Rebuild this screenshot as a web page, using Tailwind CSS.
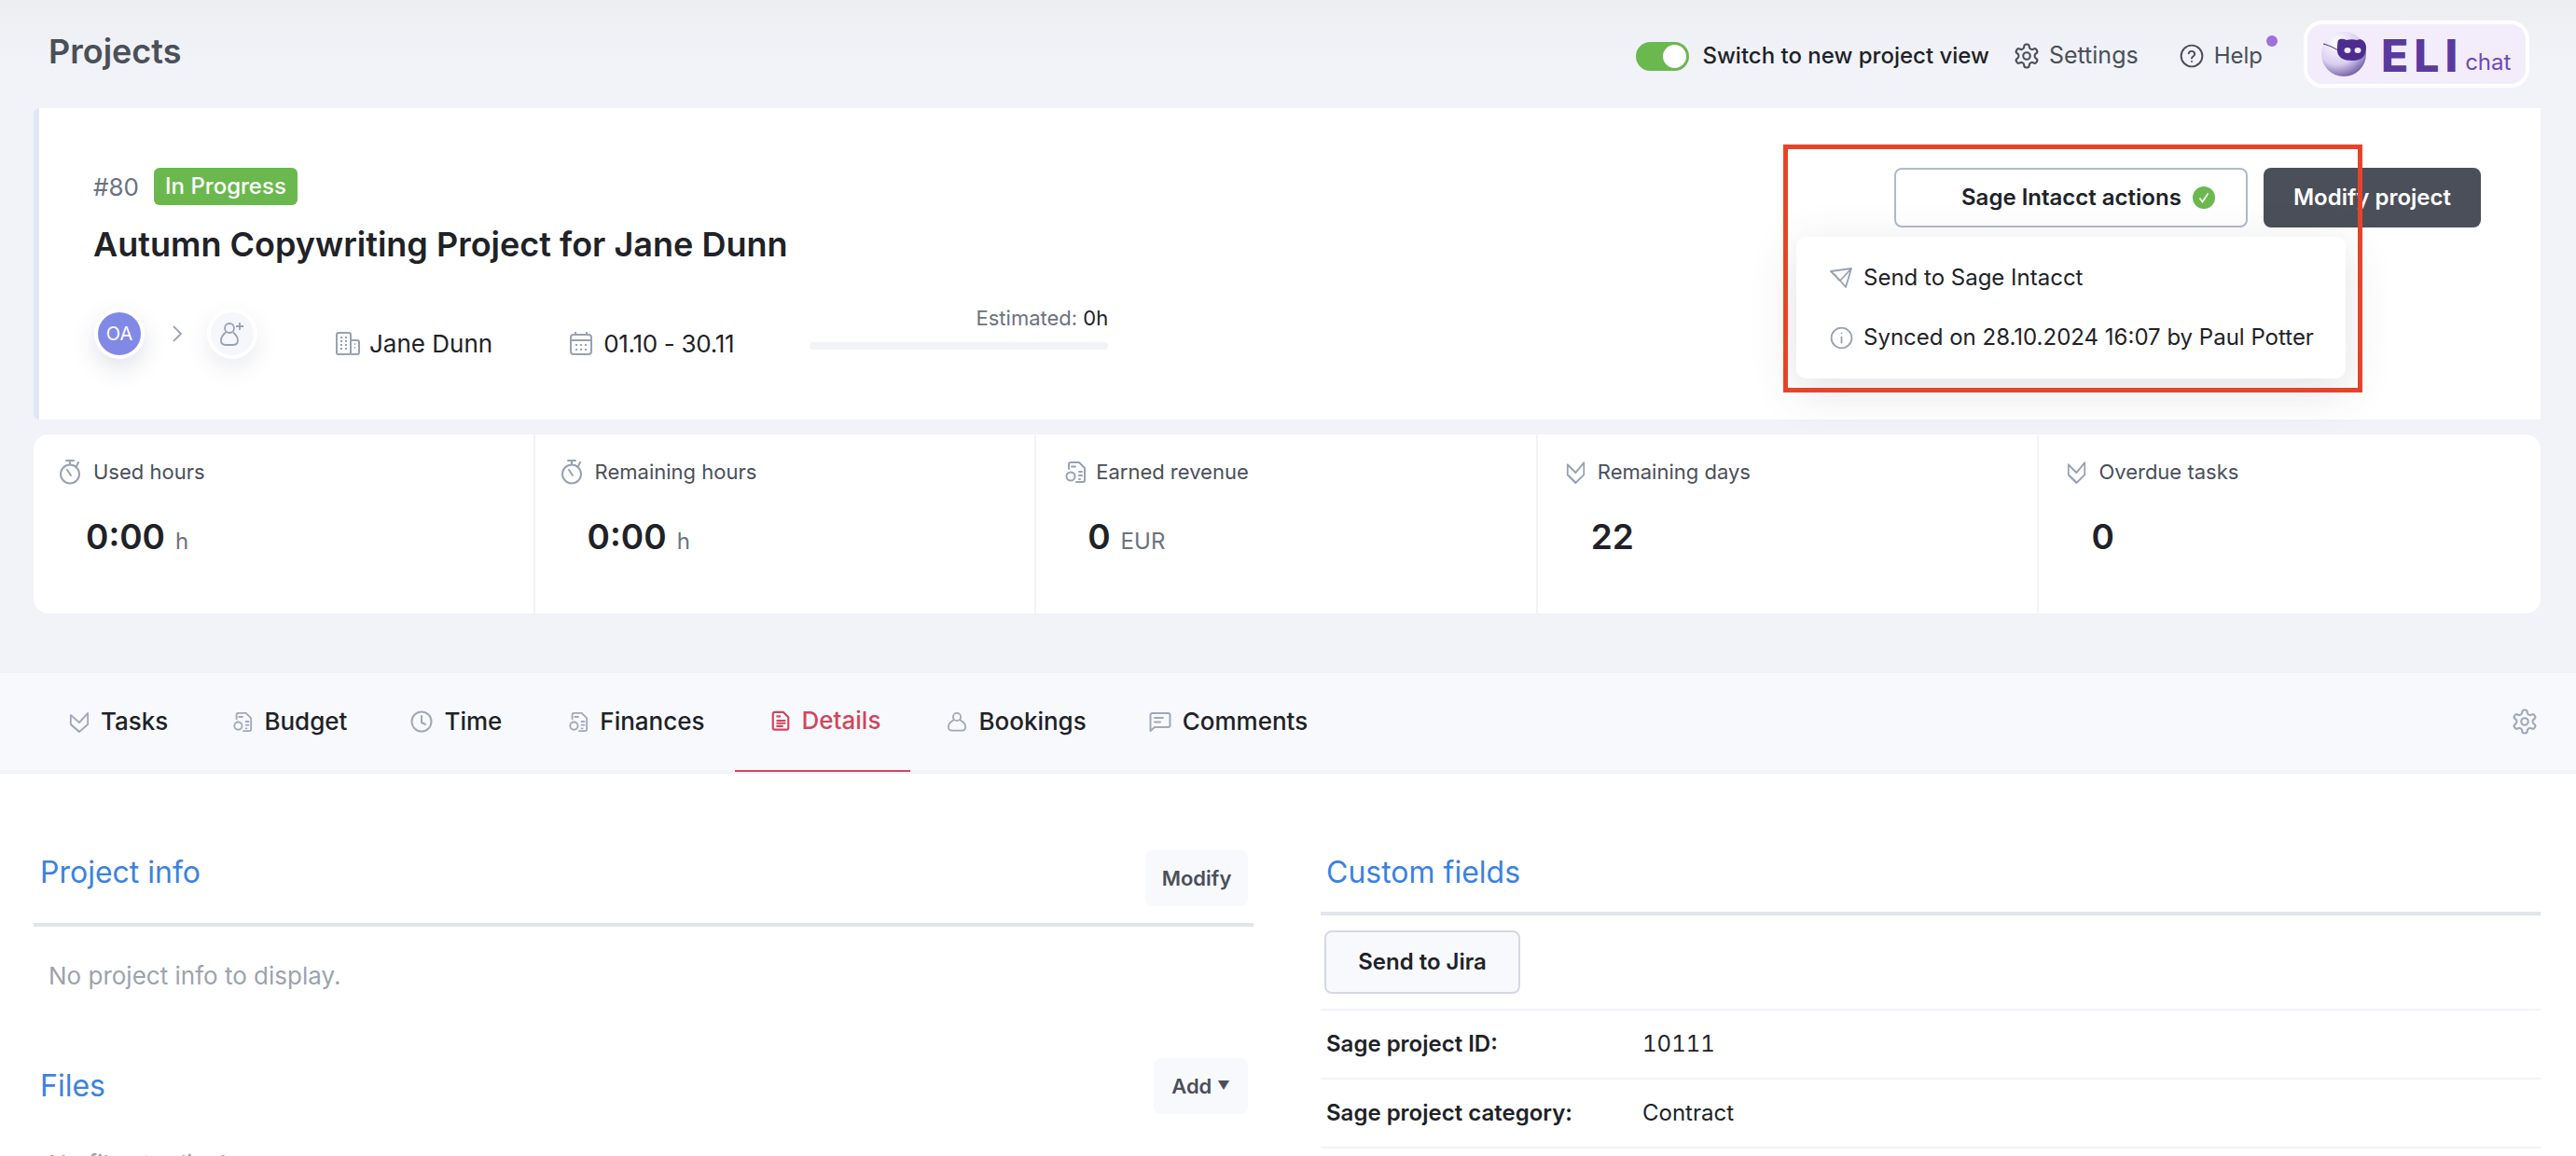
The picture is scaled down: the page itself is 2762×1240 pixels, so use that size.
<!DOCTYPE html>
<html lang="en">
<head>
    <meta charset="UTF-8">
    <title>Projects</title>
    <script src="https://cdn.jsdelivr.net/npm/@tailwindcss/browser@4"></script>
</head>
<body class="bg-[#f1f3f8] font-['Inter',sans-serif] text-[#202227]">
    <!-- shared icons -->
    <svg class="hidden">
        <symbol id="i-check" viewBox="0 0 24 24" preserveAspectRatio="none" fill="none" stroke-width="2" stroke-linejoin="round"><path d="M2 5v10l10 8 10-8V3L12 13z"/><path d="M2 15l10 8"/></symbol>
        <symbol id="i-budget" viewBox="0 0 24 24" fill="none" stroke-width="2" stroke-linecap="round" stroke-linejoin="round"><path d="M5 9V4a2 2 0 0 1 2-2h9l6 6v13a2 2 0 0 1-2 2h-7"/><circle cx="7" cy="17" r="4.5"/><path d="M8 6.5h4M16 12h3M16 16h3M16 20h1"/></symbol>
        <symbol id="i-clock" viewBox="0 0 24 24" fill="none" stroke-width="2" stroke-linecap="round" stroke-linejoin="round"><circle cx="12" cy="12" r="10.5"/><path d="M12 6v7l4 2"/></symbol>
        <symbol id="i-doc" viewBox="0 0 24 24" fill="none" stroke-width="2.4" stroke-linecap="round" stroke-linejoin="round"><path d="M5 2h10l6 6v13a1.5 1.5 0 0 1-1.500 1.500h-15A1.500 1.500 0 0 1 3 21V4a2 2 0 0 1 2-2z"/><path d="M8 7h3M8 12h9M8 15h9M8 18.500h6"/></symbol>
        <symbol id="i-person" viewBox="0 0 24 24" fill="none" stroke-width="2" stroke-linejoin="round"><circle cx="12" cy="6.500" r="4.500"/><path d="M8.500 10C5 12 2 15 2 18c0 3 2 4.500 4 4.500h12c2 0 4-1.500 4-4.500 0-3-3-6-6.500-8"/></symbol>
        <symbol id="i-comment" viewBox="0 0 24 24" fill="none" stroke-width="2" stroke-linecap="round" stroke-linejoin="round"><path d="M1.500 22V5a2 2 0 0 1 2-2h17a2 2 0 0 1 2 2v11a2 2 0 0 1-2 2H6z"/><path d="M6 8h9M6 12.500h6"/></symbol>
        <symbol id="i-watch" viewBox="0 0 24 28" fill="none" stroke-width="2" stroke-linecap="round" stroke-linejoin="round"><circle cx="11" cy="16.500" r="10"/><path d="M7 2h8M11 2v4M20 4l-2.500 5M8 12l4 6"/></symbol>
        <symbol id="i-gear" viewBox="0 0 24 24" fill="none" stroke-width="1.700" stroke-linecap="round" stroke-linejoin="round"><path d="M12.220 2h-.44a2 2 0 0 0-2 2v.18a2 2 0 0 1-1 1.730l-.43.25a2 2 0 0 1-2 0l-.15-.08a2 2 0 0 0-2.730.73l-.22.38a2 2 0 0 0 .73 2.730l.15.1a2 2 0 0 1 1 1.720v.51a2 2 0 0 1-1 1.740l-.15.09a2 2 0 0 0-.73 2.730l.22.38a2 2 0 0 0 2.730.73l.15-.08a2 2 0 0 1 2 0l.43.25a2 2 0 0 1 1 1.730V20a2 2 0 0 0 2 2h.44a2 2 0 0 0 2-2v-.18a2 2 0 0 1 1-1.730l.43-.25a2 2 0 0 1 2 0l.15.08a2 2 0 0 0 2.730-.73l.22-.39a2 2 0 0 0-.73-2.730l-.15-.08a2 2 0 0 1-1-1.740v-.5a2 2 0 0 1 1-1.740l.15-.09a2 2 0 0 0 .73-2.730l-.22-.38a2 2 0 0 0-2.730-.73l-.15.08a2 2 0 0 1-2 0l-.43-.25a2 2 0 0 1-1-1.730V4a2 2 0 0 0-2-2z"/><circle cx="12" cy="12" r="3"/></symbol>
    </svg>

    <div class="relative w-[2762px] h-[1240px] overflow-hidden">
        <!-- top bar -->
        <header class="h-[116px] pt-[4px] pl-[52px] pr-[50px] flex items-center justify-between bg-gradient-to-b from-[#eceef2] to-[#f1f3f8] to-[60%]">
            <h1 class="text-[36px] font-semibold text-[#4b4f59] leading-none -mt-[10px]">Projects</h1>
            <div class="flex items-center">
                <div class="w-[57px] h-[31px] rounded-full bg-[#6bb84f] flex items-center justify-end pr-[3px]">
                    <div class="w-[25px] h-[25px] rounded-full bg-white"></div>
                </div>
                <span class="ml-[14px] text-[24px] font-medium">Switch to new project view</span>
                <svg class="ml-[25px] w-[30px] h-[30px] stroke-[#4b4f59]"><use href="#i-gear"/></svg>
                <span class="ml-[9px] text-[25px] text-[#4b4f59]">Settings</span>
                <svg class="ml-[44px] w-[26px] h-[26px]" viewBox="0 0 24 24" fill="none" stroke="#4b4f59" stroke-width="1.800" stroke-linecap="round"><circle cx="12" cy="12" r="10.500"/><path d="M9 9.500a3 3 0 0 1 5.900.8c0 2-2.900 2.400-2.900 4"/><path d="M12 17.500h.01"/></svg>
                <span class="relative ml-[11px] mr-[44px] text-[24px] text-[#4b4f59]">Help
                    <span class="absolute -top-[4px] -right-[16px] w-[12px] h-[12px] rounded-full bg-[#a070dd]"></span>
                </span>
                <div class="w-[242px] h-[72px] -mt-[4px] rounded-[20px] border-4 border-white bg-[#f3edfb] flex items-center pl-[15px]">
                    <svg class="w-[50px] h-[50px]" viewBox="0 0 50 50">
                        <defs><radialGradient id="ball" cx="35%" cy="25%" r="80%"><stop offset="0" stop-color="#ffffff"/><stop offset=".6" stop-color="#d9cff0"/><stop offset="1" stop-color="#6f5ca3"/></radialGradient></defs>
                        <circle cx="24" cy="25" r="24" fill="url(#ball)"/>
                        <path d="M2 14c8 2 14 6 18 8" stroke="#3d2a6e" stroke-width="1" fill="none"/>
                        <path d="M18 10c3-2 6-1 9 0 4-1 7-1 11 0 4-2 9 0 10 7 0 10-4 15-15 15-9 0-15-3-16-10 0-4 0-9 1-12z" fill="#4d2c8f"/>
                        <ellipse cx="28" cy="21" rx="3.500" ry="3" fill="#efe8fb"/>
                        <ellipse cx="39" cy="21" rx="3.500" ry="3" fill="#efe8fb"/>
                    </svg>
                    <span class="ml-[14px] mt-[4px] text-[48px] font-extrabold leading-none text-[#5b3a9f] tracking-[6px]">ELI</span>
                    <span class="ml-[2px] mt-[18px] text-[24px] leading-none text-[#6d4bb0]">chat</span>
                </div>
            </div>
        </header>

        <!-- project card -->
        <section class="relative ml-[36px] w-[2688px] h-[334px] bg-white border-l-[6px] border-[#e1e7f3] rounded-l-[6px] pl-[58px]">
            <div class="pt-[64px] flex items-center h-[104px]">
                <span class="text-[26px] text-[#6b7280]">#80</span>
                <span class="ml-[16px] h-[40px] w-[154px] rounded-[6px] bg-[#6bb84f] text-white text-[24px] font-medium flex items-center justify-center">In Progress</span>
            </div>
            <h2 class="mt-[20px] text-[36px] leading-[44px] font-semibold">Autumn Copywriting Project for Jane Dunn</h2>

            <div class="mt-[47px] flex items-start">
                <div class="ml-[1px] flex items-center">
                    <div class="w-[54px] h-[54px] rounded-full border-[4px] border-white bg-[#8189e6] text-white text-[20px] flex items-center justify-center shadow-[0_10px_24px_rgba(90,100,140,0.18)]">OA</div>
                    <svg class="ml-[27px] w-[16px] h-[22px]" viewBox="0 0 16 22" fill="none" stroke="#a0a8b8" stroke-width="2"><path d="M4 3l8 8-8 8"/></svg>
                    <div class="ml-[24px] w-[54px] h-[54px] rounded-full border-[4px] border-white bg-[#f5f7fc] flex items-center justify-center shadow-[0_10px_24px_rgba(90,100,140,0.12)]">
                        <svg class="w-[28px] h-[28px]" viewBox="0 0 28 28" fill="none" stroke="#98a1b3" stroke-width="1.800" stroke-linejoin="round"><circle cx="11" cy="8" r="5"/><path d="M7 12.500C4 15 2 18 2 21c0 3 2 5 5 5h8c3 0 5-2 5-5 0-3-2-6-5-8.500M22 2v8M18 6h8"/></svg>
                    </div>
                </div>
                <div class="ml-[84px] mt-[16px] flex items-center h-[42px]">
                    <svg class="w-[26px] h-[26px]" viewBox="0 0 26 26" fill="none" stroke="#98a1b3" stroke-width="2"><rect x="1" y="2" width="15" height="23" rx="2"/><path d="M16 10h7a2 2 0 0 1 2 2v11a2 2 0 0 1-2 2h-7"/><path d="M5 7h2M10 7h2M5 11h2M10 11h2M5 15h2M10 15h2M5 19h2M10 19h2M20 14h1M20 18h1"/></svg>
                    <span class="ml-[10px] text-[26px]">Jane Dunn</span>
                </div>
                <div class="ml-[83px] mt-[16px] flex items-center h-[42px]">
                    <svg class="w-[24px] h-[26px]" viewBox="0 0 24 26" fill="none" stroke="#98a1b3" stroke-width="2"><rect x="1" y="4" width="22" height="21" rx="3"/><path d="M1 10h22M6 1v4M18 1v4M6 15h2M11 15h2M16 15h2M6 20h2M11 20h2M16 20h2"/></svg>
                    <span class="ml-[12px] text-[26px] tracking-[-0.3px]">01.10 - 30.11</span>
                </div>
                <div class="ml-[81px] -mt-[4px] w-[320px]">
                    <p class="text-right text-[22px] leading-[28px] text-[#6b7280]">Estimated: <span class="text-[#202227]">0h</span></p>
                    <div class="mt-[12px] h-[8px] rounded-full bg-[#f1f3f8]"></div>
                </div>
            </div>

            <!-- actions -->
            <div class="absolute top-[64px] right-[64px] flex gap-[17px]">
                <button class="relative w-[379px] h-[64px] rounded-[8px] border-2 border-[#b0bacc] bg-white flex items-center pl-[70px] text-[24px] font-semibold">
                    Sage Intacct actions
                    <svg class="ml-[12px] w-[24px] h-[24px]" viewBox="0 0 24 24"><circle cx="12" cy="12" r="12" fill="#6bb84f"/><path d="M7.500 12.500l3 4 6-9" fill="none" stroke="#fff" stroke-width="1.600"/></svg>
                </button>
                <button class="w-[233px] h-[64px] rounded-[8px] bg-[#4b4f59] text-white text-[24px] font-semibold">Modify project</button>
            </div>
            <div class="absolute z-10 top-[138px] right-[209px] w-[589px] h-[152px] bg-white rounded-[10px] shadow-[0_12px_50px_rgba(60,70,90,0.16)] pl-[36px] flex flex-col">
                <div class="h-[32px] mt-[28px] flex items-center">
                    <svg class="w-[24px] h-[24px]" viewBox="0 0 24 24" fill="none" stroke="#98a1b3" stroke-width="1.800" stroke-linejoin="round"><path d="M1 5l22-3-6 20-6-7zM23 2L11 15l0 0M5 8l5 7"/></svg>
                    <span class="ml-[12px] text-[24px]">Send to Sage Intacct</span>
                </div>
                <div class="h-[32px] mt-[32px] flex items-center">
                    <svg class="w-[25px] h-[25px]" viewBox="0 0 24 24" fill="none" stroke="#98a1b3" stroke-width="1.700" stroke-linecap="round"><circle cx="12" cy="12" r="10.500"/><path d="M12 11v6M12 7h.01"/></svg>
                    <span class="ml-[11px] text-[24px]">Synced on 28.10.2024 16:07 by Paul Potter</span>
                </div>
            </div>
        </section>

        <!-- stats -->
        <section class="ml-[36px] w-[2688px] mt-[16px] h-[192px] bg-white rounded-[16px] grid grid-cols-5 divide-x-2 divide-[#f1f3f8]">
            <div class="pl-[28px] pt-[26px]">
                <div class="flex items-center h-[28px] gap-[12px]"><svg class="w-[24px] h-[28px] stroke-[#98a1b3]"><use href="#i-watch"/></svg><span class="text-[22px] text-[#4b4f59]">Used hours</span></div>
                <div class="ml-[28px] mt-[28px] flex items-baseline gap-[11px]"><span class="text-[37px] font-semibold">0:00</span><span class="text-[24px] text-[#6b7280]">h</span></div>
            </div>
            <div class="pl-[28px] pt-[26px]">
                <div class="flex items-center h-[28px] gap-[12px]"><svg class="w-[24px] h-[28px] stroke-[#98a1b3]"><use href="#i-watch"/></svg><span class="text-[22px] text-[#4b4f59]">Remaining hours</span></div>
                <div class="ml-[28px] mt-[28px] flex items-baseline gap-[11px]"><span class="text-[37px] font-semibold">0:00</span><span class="text-[24px] text-[#6b7280]">h</span></div>
            </div>
            <div class="pl-[30px] pt-[26px]">
                <div class="flex items-center h-[28px] gap-[10px]"><svg class="w-[24px] h-[28px] stroke-[#98a1b3]"><use href="#i-budget"/></svg><span class="text-[22px] text-[#4b4f59]">Earned revenue</span></div>
                <div class="ml-[25px] mt-[28px] flex items-baseline gap-[11px]"><span class="text-[37px] font-semibold">0</span><span class="text-[24px] text-[#6b7280]">EUR</span></div>
            </div>
            <div class="pl-[30px] pt-[26px]">
                <div class="flex items-center h-[28px] gap-[13px]"><svg class="w-[21px] h-[26px] stroke-[#98a1b3]"><use href="#i-check"/></svg><span class="text-[22px] text-[#4b4f59]">Remaining days</span></div>
                <div class="ml-[27px] mt-[28px] flex items-baseline gap-[11px]"><span class="text-[37px] font-semibold">22</span></div>
            </div>
            <div class="pl-[30px] pt-[26px]">
                <div class="flex items-center h-[28px] gap-[13px]"><svg class="w-[21px] h-[26px] stroke-[#98a1b3]"><use href="#i-check"/></svg><span class="text-[22px] text-[#4b4f59]">Overdue tasks</span></div>
                <div class="ml-[26px] mt-[28px] flex items-baseline gap-[11px]"><span class="text-[37px] font-semibold">0</span></div>
            </div>
        </section>

        <!-- tabs -->
        <nav class="mt-[64px] h-[108px] bg-[#f8f9fd] border-b-4 border-[#f1f3f8] pl-[35px] pr-[40px] flex justify-between">
            <div class="flex text-[26px] font-medium">
                <a class="h-[106px] pb-[3px] pl-[39px] pr-[30px] flex items-center gap-[12px]"><svg class="w-[22px] h-[24px] stroke-[#a0a8b8]"><use href="#i-check"/></svg>Tasks</a>
                <a class="h-[106px] pb-[3px] pl-[39px] pr-[32px] flex items-center gap-[12px]"><svg class="w-[22px] h-[24px] stroke-[#a0a8b8]"><use href="#i-budget"/></svg>Budget</a>
                <a class="h-[106px] pb-[3px] pl-[36px] pr-[32px] flex items-center gap-[12px]"><svg class="w-[24px] h-[24px] stroke-[#a0a8b8]"><use href="#i-clock"/></svg>Time</a>
                <a class="h-[106px] pb-[3px] pl-[39px] pr-[32px] flex items-center gap-[12px]"><svg class="w-[22px] h-[24px] stroke-[#a0a8b8]"><use href="#i-budget"/></svg>Finances</a>
                <a class="h-[106px] pb-[3px] pl-[38px] pr-[32px] flex items-center gap-[12px] border-b-2 border-[#d0465c] text-[#d0465c]"><svg class="w-[22px] h-[24px] stroke-[#d0465c]"><use href="#i-doc"/></svg>Details</a>
                <a class="h-[106px] pb-[3px] pl-[39px] pr-[32px] flex items-center gap-[12px]"><svg class="w-[22px] h-[24px] stroke-[#a0a8b8]"><use href="#i-person"/></svg>Bookings</a>
                <a class="h-[106px] pb-[3px] pl-[35px] pr-[32px] flex items-center gap-[12px]"><svg class="w-[24px] h-[24px] stroke-[#a0a8b8]"><use href="#i-comment"/></svg>Comments</a>
            </div>
            <div class="flex items-center h-[106px] pb-[3px]"><svg class="w-[30px] h-[30px] stroke-[#a0a8b8]"><use href="#i-gear"/></svg></div>
        </nav>

        <!-- details -->
        <main class="h-[410px] bg-white pl-[36px] pr-[38px] flex gap-[72px]">
            <div class="w-[1308px]">
                <div class="h-[164px] border-b-4 border-[#e1e5ec] flex justify-between pt-[82px] pl-[7px] pr-[6px]">
                    <h3 class="text-[32px] leading-[48px] text-[#3b82e0]">Project info</h3>
                    <button class="w-[110px] h-[60px] rounded-[8px] bg-[#f8f9fd] text-[22px] font-semibold text-[#4b4f59]">Modify</button>
                </div>
                <p class="mt-[37px] pl-[16px] text-[26px] leading-[32px] text-[#9ca3af]">No project info to display.</p>
                <div class="mt-[72px] flex justify-between pl-[7px] pr-[6px]">
                    <h3 class="text-[32px] leading-[48px] mt-[6px] text-[#3b82e0]">Files</h3>
                    <button class="w-[101px] h-[60px] rounded-[8px] bg-[#f8f9fd] text-[22px] font-semibold text-[#4b4f59] flex items-center justify-center gap-[6px]">Add <span class="text-[13px]">▼</span></button>
                </div>
                <p class="mt-[38px] pl-[16px] text-[26px] leading-[32px] text-[#9ca3af]">No files to display.</p>
            </div>
            <div class="flex-1">
                <div class="h-[152px] border-b-4 border-[#e1e5ec] pt-[82px] pl-[6px]">
                    <h3 class="text-[32px] leading-[48px] text-[#3b82e0]">Custom fields</h3>
                </div>
                <div class="pt-[16px] pb-[16px] pl-[4px] border-b-2 border-[#f1f3f8]">
                    <button class="w-[210px] h-[68px] rounded-[8px] border-2 border-[#d5d8e5] bg-[#f8f9fd] text-[24px] font-semibold">Send to Jira</button>
                </div>
                <div class="h-[74px] pl-[6px] border-b-2 border-[#f1f3f8] flex items-center text-[24px]">
                    <span class="w-[339px] font-semibold">Sage project ID:</span><span class="tabular-nums">10111</span>
                </div>
                <div class="h-[74px] pl-[6px] border-b-2 border-[#f1f3f8] flex items-center text-[24px]">
                    <span class="w-[339px] font-semibold">Sage project category:</span><span>Contract</span>
                </div>
            </div>
        </main>

        <!-- red annotation frame -->
        <div class="absolute z-20 left-[1912px] top-[155px] w-[621px] h-[266px] border-[5px] border-[#e8432a]"></div>
    </div>
</body>
</html>
